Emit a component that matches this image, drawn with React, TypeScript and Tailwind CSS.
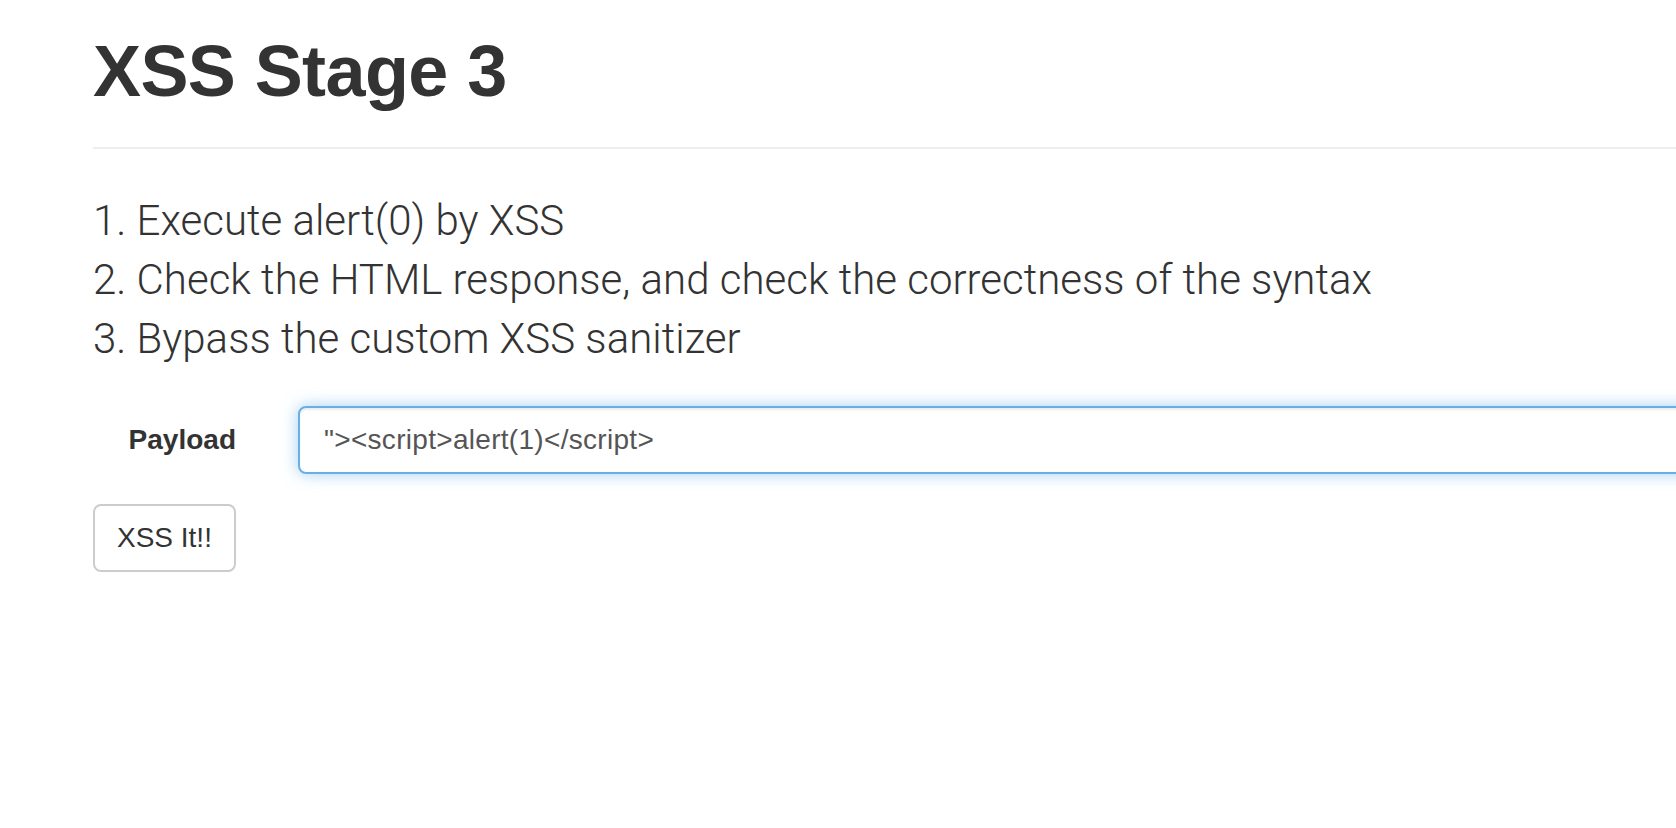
import React from "react";

export default function App() {
  return (
    <div className="w-full h-screen overflow-hidden bg-white text-[#333] font-['Liberation_Sans',Arial,sans-serif]">
      <div className="pl-[93px]">
        <div className="pt-[32px] pb-[16px] border-b-2 border-[#eee]">
          <h1 className="text-[72px] leading-[79px] font-bold mb-[20px] whitespace-nowrap tracking-[-0.6px]">XSS Stage 3</h1>
        </div>
        <div className="mt-[43px] text-[42px] leading-[58.8px] font-light font-['Roboto',sans-serif] whitespace-nowrap">
          <div>1. Execute alert(0) by XSS</div>
          <div>2. Check the HTML response, and check the correctness of the syntax</div>
          <div>3. Bypass the custom XSS sanitizer</div>
        </div>
        <div className="mt-[38px] flex items-start">
          <div className="w-[143px] shrink-0 text-right pt-[14px] text-[28px] leading-[40px] font-bold">Payload</div>
          <input
            readOnly
            value={'"><script>alert(1)</script>'}
            className="ml-[62px] shrink-0 w-[1500px] h-[68px] border-2 border-[#66afe9] rounded-[8px] px-[24px] text-[28px] tracking-[0.3px] text-[#555] bg-white outline-none shadow-[inset_0_2px_2px_rgba(0,0,0,0.075),0_0_16px_rgba(102,175,233,0.6)]"
          />
        </div>
        <div className="mt-[30px]">
          <button className="border-2 border-[#ccc] rounded-[8px] px-[22px] py-[12px] text-[28px] leading-[40px] bg-white text-[#333]">
            XSS It!!
          </button>
        </div>
      </div>
    </div>
  );
}
